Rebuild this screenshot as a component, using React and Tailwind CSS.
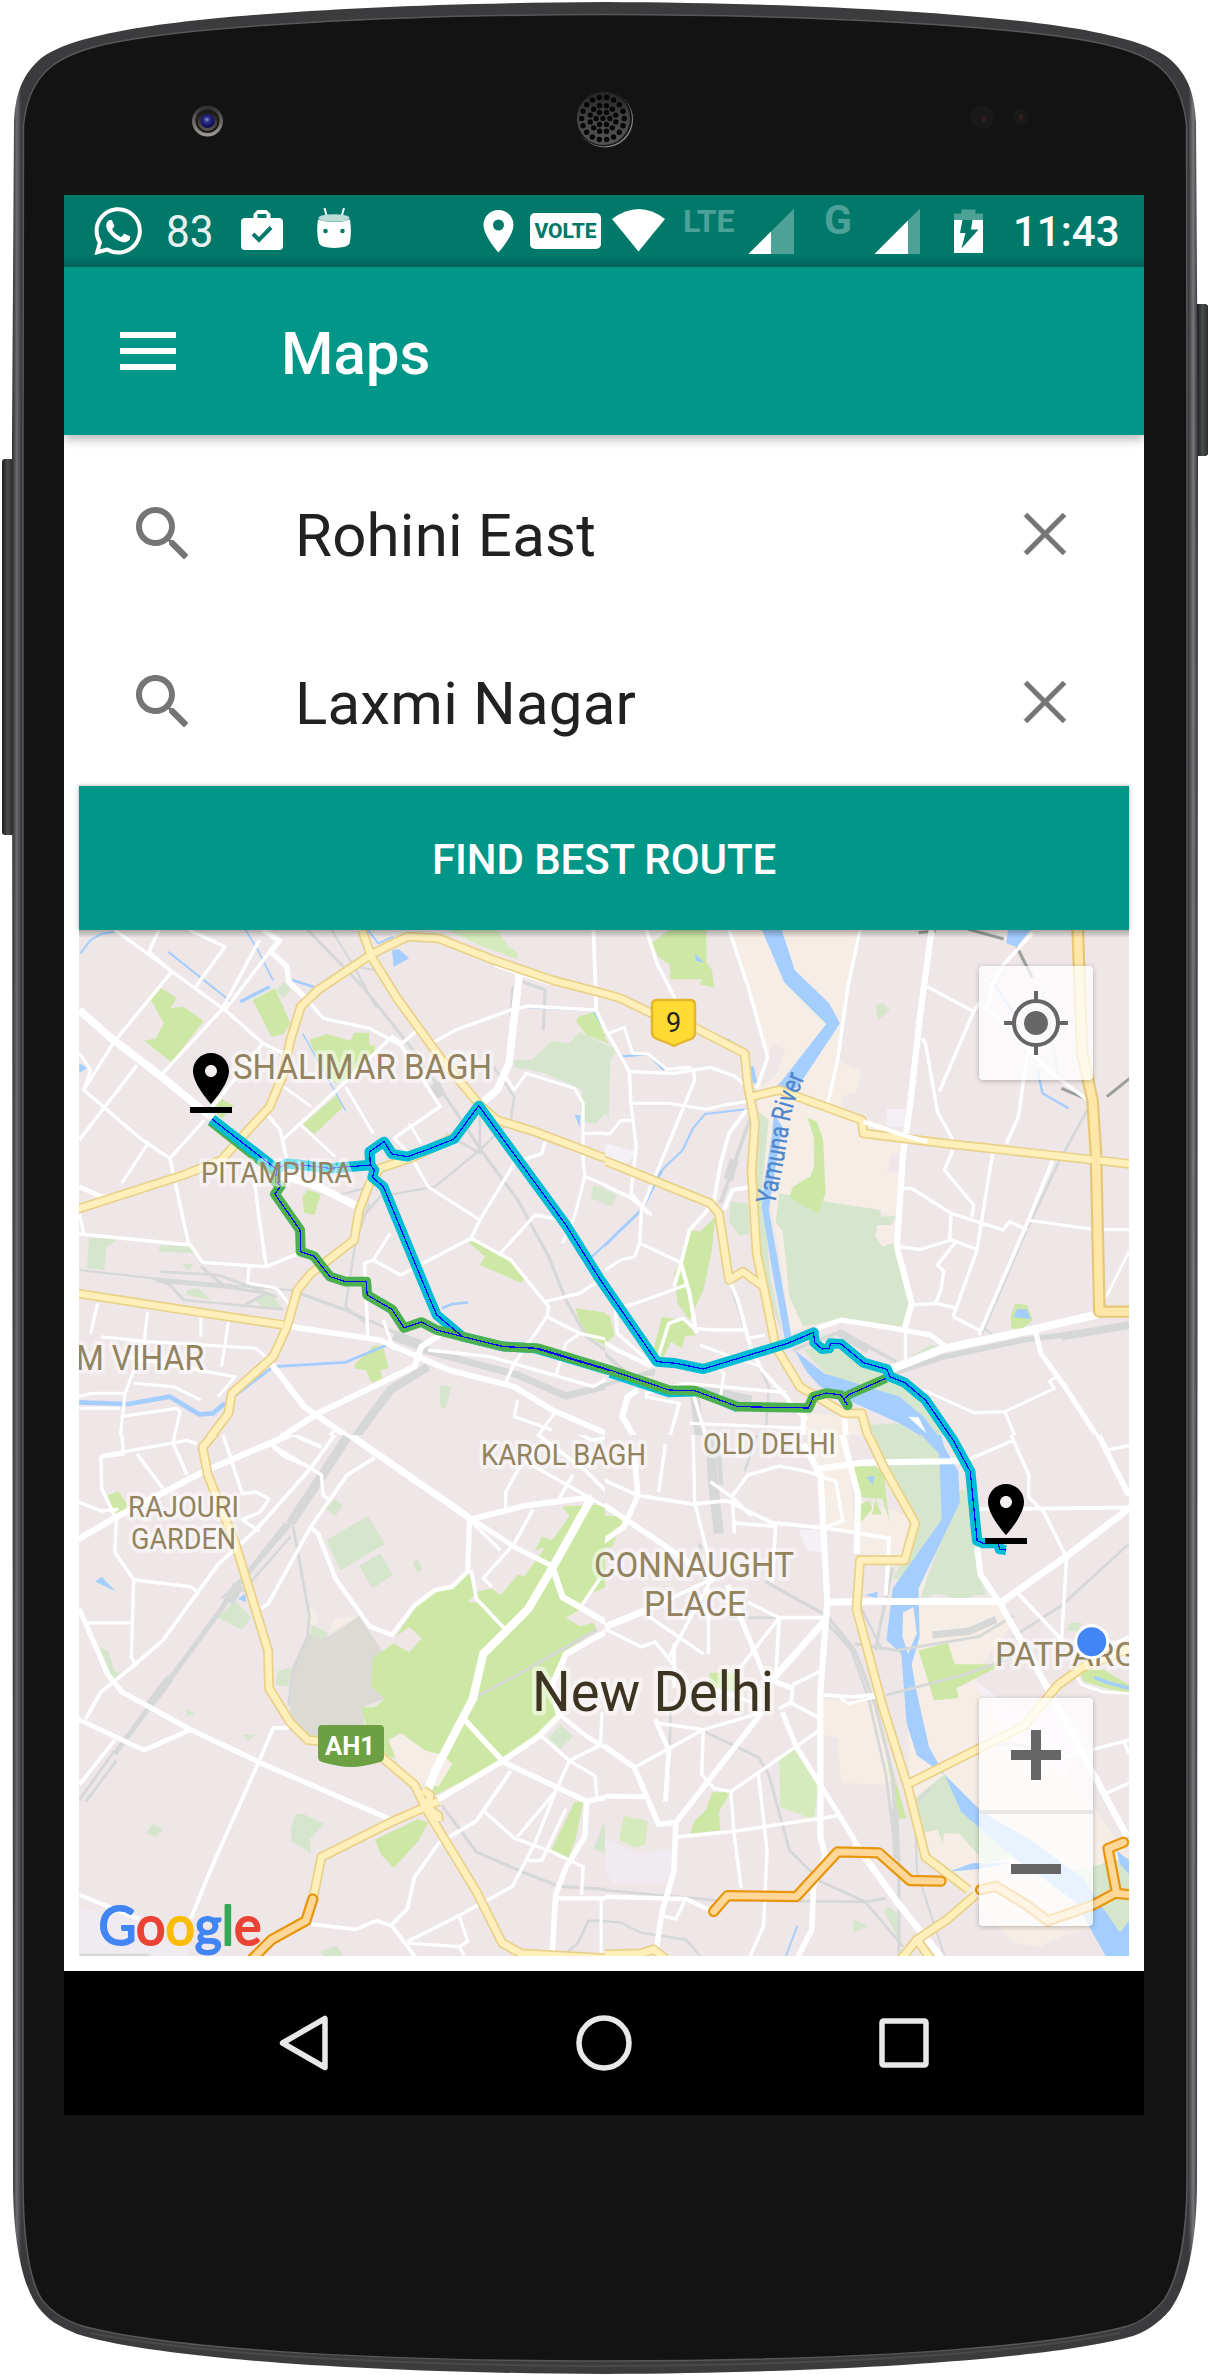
import React from "react";

/* ---------- palette ---------- */
const C = {
  land: "#eee6e7",
  park: "#cde8a5",
  parkSoft: "#d5ebbd",
  green: "#d6e6cd",
  water: "#a3ceff",
  sand: "#f6ede6",
  lilac: "#f5f0f6",
  haze: "#efebf0",
  grey: "#dcdad5",
  rail: "#d6d8d7",
  railDark: "#9b9f9c",
};

/* ---------- map data: four quadrants, each in its own local units ---------- */
/* areas: [fill, path]   lines/roads: [width, path] */
const NW = {
  areas: [
    [C.park, "M265 205L310 235 290 265 330 260 388 303 295 427 215 362 250 355 272 310 235 240Z"],
    [C.park, "M595 205L640 310 620 342 585 350 530 240Z"],
    [C.park, "M695 360L745 342 815 362 825 338 868 338 870 375 886 378 882 405 800 480 770 490 720 430Z"],
    [C.park, "M775 525L792 562 710 643 676 613Z"],
    [C.park, "M430 530L476 558 440 598 410 560Z"],
    [C.park, "M690 810L728 822 710 885 680 878 675 830Z"],
    [C.park, "M1155 965L1180 965 1285 1020 1320 1075 1310 1088 1190 1035 1205 1010Z"],
    [C.park, "M885 1275L910 1285 926 1345 900 1350 908 1375 875 1388 860 1350 825 1345 830 1330Z"],
    [C.park, "M1468 1165L1568 1180V1285L1490 1240Z"],
    [C.park, "M1475 290L1525 275 1550 340 1568 345V372L1500 345 1470 305Z"],
    [C.parkSoft, "M1095 30H1240L1270 75 1300 100 1298 118 1180 72Z"],
    [C.green, "M1480 335L1568 380V590L1550 585 1525 612 1495 605 1480 560 1490 510 1380 460 1290 440 1285 420 1340 420 1400 362 1450 370Z"],
    [C.green, "M55 955H140L105 985 100 1050 50 1045Z"],
    [C.green, "M265 975L360 980 370 1000 256 995Z"],
    [C.green, "M1520 795L1568 810V855L1512 835Z"],
    [C.green, "M1075 1395L1107 1400 1090 1468 1075 1460Z"],
    [C.green, "M620 185L642 210 620 232 598 212Z"],
    [C.green, "M325 1032H360L342 1053Z"],
    [C.green, "M340 1110L372 1105 410 1140 335 1125Z"],
    [C.green, "M535 1140L580 1118 620 1168 560 1160Z"],
    [C.water, "M935 90L955 88 985 115 940 140Z"],
    [C.water, "M27 430L50 445 27 458Z"],
    [C.water, "M1465 585L1482 585 1480 620Z"],
  ],
  water: [
    [5, "M285 95L465 243"], [9, "M495 245L580 200"], [4, "M510 30L545 90 590 182"],
    [7, "M645 180L720 205"], [5, "M30 100L60 60 90 42 130 35"],
    [13, "M27 1447L170 1452 290 1430 375 1483 415 1480 450 1450"],
    [7, "M450 1450L590 1340 800 1327 920 1275"], [5, "M865 30L895 70 940 50"],
    [7, "M1080 1165L1110 1152 1155 1147"], [4, "M1335 262L1520 272 1555 335"],
    [5, "M1515 1010L1568 960"], [3, "M675 340L735 450 800 572"],
  ],
  rails: [
    [8, "M690 30L850 200 1000 395 1110 560 1200 700 1300 840 1390 1010 1440 1140 1500 1250 1568 1300"],
    [5, "M760 30L830 150 890 265"], [8, "M1374 330L1380 210 1300 180 1285 210 1280 290"],
    [30, "M1058 490L1078 530"], [5, "M27 1050L240 1075 380 1090 640 1110"],
    [8, "M640 1110L800 1170 930 1230 1010 1275"], [20, "M1010 1285L1300 1365 1440 1428 1568 1395"],
    [7, "M260 1055L430 1065 600 1130"], [7, "M240 1075L290 1095 330 1140 620 1168"],
    [14, "M250 1080L470 1100"], [8, "M380 1040L450 1100 570 1120 500 1160"],
    [24, "M1040 1340L930 1410 830 1550"], [30, "M940 1245L1040 1285"],
    [6, "M870 850L830 960 800 1160 860 1210"], [6, "M780 826L920 786"],
    [6, "M860 880L900 830 1060 800 1190 690 1280 600 1290 530 1230 440"],
    [6, "M1190 555V700L1090 640"], [5, "M830 140L885 150"],
  ],
  roads: [
    [8, "M130 30L450 270 560 370 620 400"],
    [21, "M27 270L120 355 260 465 390 575 500 660 600 760 720 800 840 862"],
    [8, "M258 30L230 95 295 155 125 370 40 510 210 660 290 715 345 975"],
    [8, "M345 30L450 80 365 200"], [8, "M550 60L440 270 260 470"],
    [14, "M560 30L608 62 582 95 630 140 635 185 690 240"],
    [8, "M690 240L735 295 870 325 960 375 1075 560 940 655"], [8, "M580 95L450 270"],
    [8, "M195 435L27 660"], [7, "M27 400L60 450 40 510"], [8, "M560 370L430 540 400 580"],
    [7, "M230 665L150 790"], [8, "M570 580L610 630 630 720"],
    [8, "M617 660L790 495 935 350 965 370 1003 335"], [6, "M620 500L700 560"],
    [6, "M670 615L770 710"], [7, "M800 500L880 640"],
    [8, "M290 715L390 600"], [7, "M940 655L985 700 1040 800 1190 900"], [6, "M985 610L1020 670"],
    [8, "M1050 370L1120 330 1280 270 1330 258 1525 270"], [9, "M1520 30L1528 270 1568 360"],
    [20, "M1305 160L1290 290 1275 430 1240 510 1195 550"], [12, "M1235 135L1320 165 1400 190"],
    [7, "M1265 470L1290 510 1325 460 1465 505 1490 550 1490 720 1495 770 1465 890 1430 970"],
    [7, "M1490 640H1568"], [7, "M1495 770L1568 800"],
    [8, "M1380 665L1370 700 1290 730 1190 900 1165 955 960 1065 880 1020 855 1030 865 1250"],
    [8, "M1430 900L1350 885 1250 1000"], [8, "M1165 955L1280 1020 1390 1160 1385 1190 1480 1240 1568 1260"],
    [8, "M1380 1145L1480 1120 1568 1060"], [8, "M1385 1190L1290 1330 1260 1400"], [7, "M880 1020L930 940"],
    [8, "M27 942L350 975 385 1027 570 1040 640 1010 700 990"], [12, "M27 800L90 830 150 830"],
    [7, "M27 880L40 940"], [8, "M535 780L550 900 570 1040"], [7, "M520 1040L515 1088 600 1105 650 1170"],
    [15, "M640 1220L900 1260 1010 1310 1100 1350 1290 1400 1400 1470 1568 1545"],
    [7, "M80 1150L60 1240"], [7, "M225 1175L215 1270 160 1420 145 1560"], [7, "M380 1190V1250"],
    [7, "M460 1205L440 1340"], [7, "M90 1250L230 1265 540 1285 580 1320"],
    [7, "M160 1310L480 1370 430 1430"], [7, "M185 1390L300 1400 380 1440"],
    [7, "M27 1430L60 1420 160 1420"], [7, "M27 1465H145"], [7, "M145 1490L310 1465 320 1475 300 1560"],
    [16, "M580 1325L680 1460 820 1560"], [16, "M600 1560L720 1480 1000 1340 1020 1280 1080 1240"],
    [8, "M1040 1290L1220 1310 1520 1400 1568 1370"], [7, "M1300 1440L1290 1490 1400 1530"],
    [7, "M1410 1475L1350 1560"], [7, "M720 1480L770 1530 740 1560"], [7, "M910 1200L940 1290"],
    [7, "M1480 1240L1440 1270 1410 1370"],
  ],
  highways: [
    "M848 30L875 110 950 235 1080 420 1190 555 1240 600 1350 635 1568 720",
    "M20 868L330 765 440 720 500 650 580 560 620 460 640 360 670 260 720 210 880 100 980 50 1070 55 1230 120 1400 180 1568 225",
    "M20 1120L300 1165 620 1215",
    "M1190 555L1120 650 1000 710 900 745 870 790 840 870 825 960 700 1060 660 1110 630 1220 590 1310 470 1420 460 1480 390 1575",
  ],
};

const NE = {
  areas: [
    [C.sand, "M375 30H755L715 200 690 420 760 455 745 515 700 530 705 565 880 640 870 890 650 850 520 820 480 760 455 500 487 412Z"],
    [C.sand, "M490 820H540L530 930 590 1220 555 1240 520 1000Z"],
    [C.sand, "M800 910H860L862 970 820 985 800 950Z"],
    [C.sand, "M590 1480L760 1490 790 1560H590Z"],
    [C.land, "M500 372L538 390 510 470 470 500 470 460Z"],
    [C.lilac, "M833 567H885V620H833Z"],
    [C.lilac, "M0 665L105 695 80 730 0 705Z"],
    ["#f0e6ea", "M845 705L880 700 870 760 833 755Z"],
    [C.green, "M520 820L660 845 815 870 815 890 858 888 845 915 805 915 800 950 820 980 860 965 862 1000 905 1150 885 1220 700 1195 590 1220 550 1130 530 930 510 910Z"],
    [C.green, "M0 370L50 385 30 420 25 600 0 540Z"],
    [C.green, "M440 560L490 600 470 800 495 1080 530 1240 480 1100 440 800Z"],
    [C.green, "M380 845L430 850 435 940 405 948 375 905Z"],
    [C.green, "M820 248L842 270 808 300 800 258Z"],
    [C.green, "M0 800L50 825 35 858 0 850Z"],
    [C.green, "M590 1290L660 1275 880 1380 1010 1560H960L860 1450 740 1395 650 1355Z"],
    [C.green, "M780 1515L870 1510 940 1560H800Z"],
    [C.green, "M900 1310L960 1275 985 1280 900 1314Z"],
    [C.park, "M200 30H308L310 130 325 150 332 203 290 193 295 178 203 178 203 135 170 110 150 70Z"],
    [C.park, "M603 593L630 605 648 660 655 820 633 882 550 830 560 800 610 770 622 740 620 650Z"],
    [C.park, "M262 930L290 935 335 890 325 990 300 1110 260 1200 225 1150 215 1060 235 1020Z"],
    [C.park, "M180 1190L240 1200 280 1245 245 1250 240 1285 205 1265 185 1310 150 1310Z"],
    [C.park, "M0 1185L28 1185 42 1245 10 1280 0 1270Z"],
    [C.park, "M0 330L25 370 0 365Z"],
    [C.park, "M1205 1150L1240 1155 1257 1200 1225 1228 1195 1225 1192 1190Z"],
    [C.water, "M470 30H528L565 150 665 250 697 310 575 500 540 520 512 500 530 480 657 312 535 187Z"],
    [C.water, "M505 580L530 620 500 800 490 870 530 1100 560 1275 540 1275 500 1050 470 860 475 800 500 640Z"],
    [C.water, "M565 1290L650 1360 870 1430 940 1490 990 1560H950L870 1510 740 1450 640 1400 600 1355Z"],
    [C.water, "M1185 30H1250L1210 80 1180 70Z"],
    [C.water, "M275 100L303 128 278 122Z"],
    [C.water, "M1212 1167L1240 1168 1250 1198 1200 1190Z"],
    ["#ffffff", "M895 1490L925 1492 948 1540Z"],
  ],
  water: [
    [6, "M0 285L15 330"], [6, "M60 410L140 402 185 450"], [12, "M440 440L450 490"],
    [5, "M425 568L305 582 270 625 240 690 180 750"], [8, "M180 750L120 870 0 990"],
    [4, "M285 328L380 362"], [6, "M1270 450L1285 520 1360 565"],
    [3, "M1135 175L1200 280"],
  ],
  rails: [
    [7, "M1415 570L1330 730 1230 950 1110 1240"], [10, "M445 570L390 730 350 850"], [26, "M390 720L372 780"],
    [6, "M380 1100L440 1290 490 1400 480 1560"], [16, "M1568 1215L1230 1260 1000 1310 850 1360"],
    [10, "M560 1290L700 1235 860 1325"], [22, "M690 1235L780 1290"], [10, "M0 1290L90 1370 160 1360"],
    [10, "M0 1400L160 1350"], [6, "M1285 210L1330 460"], [22, "M1340 1250L1536 1215"], [6, "M1110 1220L1140 1245"],
    [26, "M250 1400L440 1440"], [26, "M275 1420L290 1560"],
  ],
  darkRails: ["M925 38L975 32", "M1070 28L1172 57", "M1210 80L1255 172", "M1340 505L1412 537", "M1472 530L1538 475"],
  roads: [
    [8, "M135 30L165 130 220 240"], [8, "M375 30L430 200 487 412 455 505"],
    [8, "M755 30L720 200 690 420 660 555"],
    [16, "M963 30L930 280 900 560 880 700 862 980 905 1150 885 1225"], [8, "M887 1220V1340"],
    [8, "M950 200L1085 275 1100 250 1165 300 1300 450 1415 540"], [8, "M1085 275L985 515"],
    [8, "M935 355L945 370 980 575 1025 660"], [9, "M1125 265L1140 190 1175 130 1255 40"],
    [8, "M1240 400L1215 590 1180 670"], [8, "M1025 690L1000 750 1085 855 1080 890"],
    [8, "M880 805H905L1020 880 1170 930 1190 905 1240 930"], [8, "M1140 700L1110 890 1095 990 1025 1190"],
    [9, "M1315 720L1240 910 1100 1245"], [7, "M1240 900L1430 928 1568 930"],
    [8, "M1020 880L1015 960"], [8, "M865 980L930 988 1020 960 1095 988"],
    [8, "M1030 970L980 1035 998 1055 990 1110 975 1150"], [8, "M905 1155L975 1150 1040 1165"],
    [8, "M1025 1190L1100 1230"], [6, "M1536 995L1470 1130"],
    [13, "M630 1225L700 1200 850 1225 960 1245 1010 1285"], [22, "M840 1350L1000 1285 1230 1235 1445 1183"],
    [13, "M1265 1235L1280 1300 1350 1400 1450 1560"],
    [7, "M940 1410L1085 1478 1175 1475 1320 1405 1305 1385 1325 1370"], [7, "M1175 1475L1210 1560"],
    [8, "M0 300L25 345 85 455 90 550 105 680 90 820 140 880"],
    [7, "M25 340L70 322 95 400 140 402 195 448 265 442"],
    [8, "M85 455L215 460 320 442 390 468 420 495"], [8, "M270 445L275 480 120 870 115 970 240 1030"],
    [7, "M95 550H200L310 568 360 555 425 545"], [7, "M0 645L30 640 60 602 90 600"], [8, "M0 790L85 830 150 885"],
    [9, "M425 570L375 640 350 730 330 850 260 930 235 1030 215 1100"],
    [10, "M235 1030L260 1120 280 1240"], [7, "M115 970L100 1010 60 1020 0 1060"],
    [8, "M250 1095L90 1155 45 1165 50 1240 160 1340"], [8, "M160 1340L200 1210 240 1195 275 1225 330 1230 420 1230"],
    [7, "M430 1255L480 1245"], [10, "M360 870L385 810 440 800"], [9, "M380 1090L400 1140 430 1255 445 1300 470 1350 550 1440"],
    [7, "M290 1275L380 1310 470 1340"], [11, "M0 1260L50 1290 150 1340"], [7, "M330 1330L360 1360 350 1430"],
    [8, "M130 1420L250 1390 540 1418"], [16, "M110 1410L80 1430 65 1490 110 1570"],
    [8, "M130 1430L230 1450 200 1560"], [8, "M265 1400L310 1560"], [12, "M590 1480V1560"],
    [7, "M260 1510L600 1525"], [14, "M710 1490L715 1560"], [12, "M545 1440L600 1500"],
  ],
  highways: [
    "M-10 712L320 850 345 880 375 1080 415 1055 475 1100",
    "M440 530L520 510 760 600 765 640 1000 670 1568 735",
    "M-10 214L60 235 150 280 270 320 420 400 430 500 450 610 440 750 455 1000 475 1100 510 1280 580 1400 710 1480 760 1480 785 1575",
  ],
  wide: ["M1387 25L1400 400 1430 540 1440 700 1450 1175H1575"],
  overlay: [[13, "M765 605L880 645 950 665"]],
};

const SW = {
  areas: [
    [C.haze, "M27 1390L200 1410 340 1460 345 1530H27Z"],
    [C.grey, "M640 800L645 700 695 590 750 600 840 540 905 640 875 745 915 780 850 805 855 880 830 900H700L640 840Z"],
    [C.park, "M1155 410L1180 470 1225 460 1250 480 1300 420 1320 425 1380 340 1350 350 1370 310 1400 320 1450 250 1430 222 1568 215V450L1500 480 1485 520 1440 545 1480 570 1520 560 1530 580 1430 650 1400 740 1420 830 1360 900 1250 965 1060 1060 1040 1035 1080 950 1020 930 960 880 925 900 950 955 910 940 860 860 845 805 885 805 915 780 875 745 880 660 940 620 985 645 1022 605 985 572 945 600 1000 520 1060 465 1110 455Z"],
    [C.land, "M1180 465L1225 455 1205 425 1185 440Z"],
    [C.land, "M1155 500L1180 475 1190 500Z"],
    [C.sand, "M925 900L965 882 1030 930 1085 945 1110 970 1070 1035 1010 1025 960 990Z"],
    [C.sand, "M750 590L770 548 835 540Z"],
    [C.sand, "M695 515L712 522 720 560 697 570Z"],
    [C.park, "M885 1190L1010 1130 1040 1140 1010 1195 940 1272 905 1235Z"],
    [C.park, "M1465 1080H1490L1470 1180 1445 1250 1395 1225Z"],
    [C.park, "M110 190L140 178 165 215 160 240 135 250 115 215Z"],
    [C.green, "M745 320L865 250 915 330 785 408Z"],
    [C.green, "M840 395L900 358 938 420 878 460Z"],
    [C.green, "M770 200L792 220 770 250 742 228Z"],
    [C.green, "M430 545L480 495 525 545 500 580Z"],
    [C.green, "M1010 376L1022 405 1008 414 995 382Z"],
    [C.green, "M655 1115L678 1115 738 1143 695 1190 700 1230 645 1195 640 1160Z"],
    [C.green, "M240 1143L270 1158 250 1182 220 1170Z"],
    [C.green, "M85 630L110 640 130 700 150 710 125 728Z"],
    [C.green, "M605 700L640 690 635 745 595 740Z"],
    [C.green, "M700 565L750 590 735 608 700 595Z"],
    [C.green, "M1425 855L1460 890 1425 925 1390 895Z"],
    [C.green, "M340 812L365 823 335 835Z"],
    [C.green, "M500 885L538 885 518 902Z"],
    [C.green, "M725 1515L775 1497 795 1530H740Z"],
    [C.green, "M1550 1140L1568 1180V1235L1520 1215Z"],
    [C.water, "M73 440L92 426 132 468Z"],
    [C.water, "M488 490L510 475V500Z"],
  ],
  water: [],
  rails: [
    [26, "M825 -10L720 150 640 270"], [14, "M640 270L470 470 440 520 300 710 130 940"],
    [6, "M625 270L500 430 440 490"], [6, "M640 310L500 470"], [30, "M490 450L460 500"], [24, "M290 720L230 800"],
    [7, "M648 280L695 540 690 600 645 700 635 800"], [7, "M130 930L27 1075"], [7, "M135 960L45 1080"],
    [7, "M1180 775L1300 710 1530 580"], [8, "M1080 1090L1180 1225 1330 1290 1420 1325 1568 1335"],
    [7, "M1430 1527L1475 1490 1505 1425 1568 1425"], [5, "M27 1524H230"],
  ],
  roads: [
    [18, "M770 -15L1160 255"], [13, "M1160 255L1300 345 1400 395"],
    [16, "M20 320L130 255 390 120 600 30 680 -5"], [15, "M1160 260L1320 220 1515 195"],
    [22, "M1515 195L1440 330 1395 410 1330 520 1200 650 1170 780 1060 990 1030 1070"],
    [9, "M1340 0L1500 120 1568 190"], [9, "M1420 -20L1515 30 1568 20"],
    [8, "M150 0L155 70 90 78 92 170 135 260 130 355 185 435 178 660 190 680"],
    [8, "M90 75L340 30 370 40"], [8, "M195 70L270 170"], [8, "M305 0L300 40 340 130"], [8, "M27 210L90 235 140 230"],
    [8, "M580 40L730 130 735 190 760 205"], [8, "M580 40L620 75 700 110"], [9, "M620 0L730 50"],
    [9, "M775 5L700 110 540 290 430 390 270 610 190 680 90 760 45 840"],
    [9, "M885 80L805 130 700 280 575 505 555 518"],
    [11, "M700 285L720 300 770 430 870 570 935 595 1000 510 1060 465 1110 455 1160 405"],
    [13, "M1160 260L1155 405"], [9, "M1165 405L1180 490 1260 575"],
    [8, "M440 0L500 185 540 180 578 200 550 240 500 260 550 295"],
    [13, "M27 520L110 710 150 760 350 870 550 965 940 1135"],
    [8, "M45 560H180"], [8, "M185 435L350 455 370 470"],
    [12, "M20 838L215 930 350 870"], [9, "M130 900L27 1030"],
    [9, "M635 865H590L550 960 420 1250 350 1420"], [10, "M27 1350L200 1420"],
    [8, "M1345 230L1290 330 1200 430 1225 455"], [8, "M1250 350L1160 260"], [8, "M1310 100L1265 180V235"],
    [8, "M1320 90L1568 230"], [8, "M1460 130L1420 200"],
    [16, "M1400 395L1430 485 1568 565"], [8, "M1540 430L1485 510"],
    [15, "M1568 580L1440 650 1400 740 1420 830 1360 890 1250 965 1060 1078"],
    [14, "M1140 835L1260 965 1500 1078 1568 1065"], [11, "M1420 825L1500 890 1568 930"], [8, "M1545 820L1540 915 1450 960"],
    [8, "M1370 890L1450 960 1410 1050 1350 1200 1285 1325 1130 1410 980 1485"], [8, "M1450 960L1525 1005 1530 1070"],
    [9, "M1280 990L1200 1105 1180 1135 1070 1200 1000 1300 980 1390 930 1440"],
    [8, "M1200 1105L1290 1185 1400 1225 1490 1268 1485 1350"], [8, "M1410 1050L1300 1180"],
    [8, "M1320 1250H1370L1440 1100"], [14, "M1500 1080L1495 1180 1440 1270 1410 1350 1400 1527"],
    [11, "M1410 1360H1568"], [7, "M1542 1360V1527"],
    [9, "M700 1435L830 1450 890 1425 935 1440 1000 1527"], [7, "M1130 1410L1155 1485 1130 1500 980 1490"],
    [7, "M1130 1500L1145 1527"],
  ],
  highways: [
    "M440 -15L385 50 400 130 480 330 575 640 578 750 640 850 690 900 800 910 900 945 1000 1030 1040 1110 1180 1340 1255 1490 1310 1520 1575 1535",
    "M1070 1078L940 1135 730 1240 706 1360",
    "M1025 1045L1045 1060 1040 1100 1070 1120 1070 1135",
  ],
  orange: ["M705 1362L685 1425 585 1480 530 1535"],
};

const SE = {
  areas: [
    [C.sand, "M600 0H720L740 300 660 270Z"],
    [C.sand, "M740 200L900 250 890 370 750 360Z"],
    [C.sand, "M650 780L700 785 800 790 860 1000 830 1030 700 1025 690 895 650 885Z"],
    [C.sand, "M900 400L960 380 930 500 1150 505 1200 560 1080 720 1220 830 1400 1050 1536 1240V1420L1340 1470 1280 1500 1200 1490 960 1230 900 1080 890 700Z"],
    [C.lilac, "M1080 720L1220 830 1300 760 1420 900 1350 1000 1200 900Z"],
    [C.haze, "M0 1180L100 1225 215 1220 210 1320 40 1320 0 1250Z"],
    [C.lilac, "M577 290H650V355L600 350Z"],
    [C.green, "M790 -5H960L990 90 992 260 880 440 850 430 885 370 925 270 825 90Z"],
    [C.green, "M1050 170L1085 200 1100 400 1120 480 1090 480 1050 495 980 475 930 490 950 430 1000 300Z"],
    [C.green, "M900 1080L1000 1000 1090 1100 1200 1240 1120 1260 1045 1172 1000 1170 995 1200 980 1160 940 1170Z"],
    [C.green, "M1380 1280L1536 1240V1440L1510 1465 1440 1370Z"],
    [C.green, "M735 1420L778 1440 735 1462Z"],
    [C.green, "M835 1380L870 1410 875 1490 825 1400Z"],
    [C.parkSoft, "M520 945L570 920 637 1020 620 1130 523 1095Z"],
    [C.parkSoft, "M70 1120L140 1135 130 1205 100 1212 55 1190Z"],
    [C.park, "M0 250L70 250 35 340 0 343Z"],
    [C.park, "M735 105H800L825 130 832 200 750 195Z"],
    [C.park, "M755 215L785 205 790 230 755 270Z"],
    [C.park, "M800 200L818 245 790 245Z"],
    [C.park, "M820 200H832L840 265Z"],
    [C.park, "M325 1052H378L345 1110 350 1162 262 1172 275 1135 310 1100Z"],
    [C.park, "M925 640L1010 618 1030 680 1140 680 1180 650 1150 690 1035 750 1042 778 970 785Z"],
    [C.park, "M820 880L890 1128 868 1128 845 1020Z"],
    [C.park, "M318 705L395 705V760L320 750Z"],
    [C.park, "M1390 700L1460 695 1536 740V765L1470 750 1405 730Z"],
    [C.green, "M1365 560L1400 560 1390 585 1355 582Z"],
    [C.water, "M915 -5L985 70 992 260 850 460 832 610 875 650 890 850 920 945 1000 1000 1050 1110 1200 1240 1380 1370 1470 1530H1536V1425L1510 1460 1400 1300 1250 1190 1110 1110 1000 1000 955 920 915 740 905 680 928 600 925 460 1045 210 1040 120 1000 50 985 -5Z"],
    [C.sand, "M880 530L910 515 920 590 895 650 878 600Z"],
    [C.water, "M1015 1282L1080 1258 1190 1258 1100 1275Z"],
    [C.water, "M1500 1220L1536 1250V1290L1510 1260Z"],
    [C.water, "M775 137L797 133 792 160Z"],
    [C.water, "M770 480L805 470 805 488Z"],
  ],
  water: [[9, "M1435 718L1480 735 1536 750"], [4, "M573 1440L540 1527"]],
  rails: [
    [28, "M320 -5L328 150 345 300"], [12, "M340 0L352 160"], [6, "M460 0L420 120"],
    [9, "M480 440L660 540 740 640 800 800 850 1000 862 1240"], [7, "M660 560L730 640 780 780 830 1000 855 1200"],
    [7, "M370 545H640"], [7, "M740 620L860 640 1100 600 1200 540"], [7, "M830 770L1060 710 1200 660"],
    [20, "M965 595L1070 585 1150 550"], [7, "M290 870L460 950 490 1000 550 1220 640 1310 770 1370 880 1500"],
    [7, "M0 1335L330 1365 770 1370 830 1360"], [7, "M205 820L200 1000"], [8, "M850 400L815 560 800 640"],
    [7, "M1536 330L1340 510 1200 600"], [6, "M760 520L820 640"], [8, "M868 1240V1527"], [20, "M855 1100L862 1245"],
    [5, "M915 1100L920 1280 1000 1527"], [6, "M0 1425L60 1430 120 1460 250 1480 290 1527"],
    [5, "M1100 920L1200 910 1350 950"], [6, "M910 1090L960 1040"], [8, "M290 330L300 450"],
  ],
  roads: [
    [16, "M590 40L640 130 660 500 640 760 640 1180 655 1240"], [18, "M660 500L750 498H1170"],
    [16, "M700 0L750 190 745 360"], [16, "M620 115L760 95 1060 90"],
    [8, "M1060 90L1200 30 1190 0"], [8, "M1200 30L1245 130V195L1290 240 1355 370 1340 610"],
    [9, "M1100 230L1536 225"], [15, "M1440 0L1500 120 1536 190"], [8, "M1465 60L1536 45"],
    [18, "M1540 225L1350 370 1165 500"], [16, "M1095 340L1105 420 1165 510"],
    [17, "M1165 510L1300 750 1530 1180"], [9, "M1215 475L1350 620"], [18, "M-10 582L130 525"],
    [9, "M130 525L330 430"], [9, "M0 140L110 190 270 215 370 205 500 270 660 285 840 315 830 480"],
    [14, "M0 210L150 310 280 400 330 440"], [8, "M320 150L390 200 440 250"],
    [8, "M385 190L430 130 520 105 600 120 685 150 705 265 640 285"], [8, "M270 0L275 210 330 430"], [8, "M190 40L170 180"],
    [14, "M100 70L110 190 70 280 0 330"], [8, "M390 270L510 280 500 440"], [8, "M385 200L390 300"],
    [9, "M520 550L510 720"], [13, "M370 450L480 720 560 750"], [9, "M560 745L555 790 520 810"],
    [8, "M140 540L300 650"], [8, "M315 460V650"], [8, "M200 660L320 440"],
    [9, "M520 545L650 545"], [8, "M430 500L520 545 400 700"], [18, "M652 555L500 725"],
    [9, "M560 740L640 700"], [9, "M550 790L635 835"], [13, "M530 820L570 920 690 1110 750 1210"],
    [18, "M740 1200L870 1380 990 1530"], [14, "M470 820L220 1140 170 1145 100 980 0 910"],
    [14, "M220 1140L215 1280 180 1400 160 1530"], [12, "M0 1063L130 1065"],
    [8, "M100 980L300 870 470 820"], [8, "M640 870L380 1050 330 1040 295 1000 300 870 160 850"],
    [12, "M160 840L200 930 190 1080"], [8, "M0 570L120 630 160 615 220 690"], [8, "M215 620V750"],
    [8, "M380 1050L390 1180 410 1330"], [8, "M460 1000L485 1220 475 1440 435 1530"],
    [8, "M225 1182L390 1165 690 1120"], [11, "M0 1355L250 1362 320 1395"], [8, "M245 1370L220 1420 180 1410"],
    [14, "M650 1240L620 1330 615 1450 575 1530"], [9, "M650 770L740 775 820 765"], [6, "M690 770L720 795 800 775"],
    [7, "M1380 710L1400 740 1460 760 1536 765"], [7, "M1536 600L1470 630"], [8, "M1350 950L1536 900"],
    [8, "M1460 1060L1536 1025"], [8, "M1520 900L1536 940"], [7, "M320 750L470 800"], [8, "M8 840V910"],
    [8, "M8 1370V1527"],
  ],
  highways: [
    "M-10 1524L120 1520 155 1508 190 1535",
    "M890 1030L1230 860 1330 740 1400 690 1545 630",
    "M1090 1350L1010 1420 920 1480 875 1535", "M920 1480L960 1535",
    "M765 -15L825 110 915 270 885 378H755L745 520 820 800 895 1040 945 1240 1070 1335",
  ],
  orange: [
    "M330 1398L370 1352 570 1355 690 1225 810 1228 900 1308 990 1310",
    "M1105 1335L1150 1325 1240 1380 1300 1425 1430 1380 1495 1345 1545 1350",
    "M1500 1345L1475 1215 1520 1197",
  ],
};

function Strokes({ items, color, grow = 0 }) {
  return items.map(([w, d], i) => <path key={i} d={d} stroke={color} strokeWidth={w + grow} />);
}

function Quadrant({ data, clip, transform }) {
  const { areas, water, rails, roads, highways, wide = [], orange = [], darkRails = [], overlay = [] } = data;
  return (
    <g clipPath={`url(#${clip})`}>
      <g transform={transform} fill="none" strokeLinejoin="round">
        {areas.map(([f, d], i) => <path key={i} d={d} fill={f} />)}
        <Strokes items={water} color={C.water} grow={1} />
        <Strokes items={rails} color={C.rail} grow={1} />
        {darkRails.map((d) => <path key={d} d={d} stroke={C.railDark} strokeWidth="9" />)}
        <Strokes items={roads} color="#fff" grow={2} />
        {highways.map((d) => <path key={d} d={d} stroke="#ead18a" strokeWidth="29" />)}
        {wide.map((d) => <path key={d} d={d} stroke="#e6c878" strokeWidth="37" />)}
        {highways.map((d) => <path key={d} d={d} stroke="#fff0bb" strokeWidth="19" />)}
        {wide.map((d) => <path key={d} d={d} stroke="#ffe7a9" strokeWidth="24" />)}
        <Strokes items={overlay} color="#fff" />
        {orange.map((d) => <path key={d} d={d} stroke="#e8960c" strokeWidth="33" strokeLinecap="round" />)}
        {orange.map((d) => <path key={d} d={d} stroke="#ffd899" strokeWidth="20" strokeLinecap="round" />)}
      </g>
    </g>
  );
}

const HEAD = "M412 597L600 748 630 730 755 745 872 735";
const LOOP = "M872 735L870 695 912 665 935 702 980 710 1045 686 1115 657 1187 557 1256 655 1440 915 1539 1078 1704 1325 1760 1330 1839 1347 2084 1270 2159 1237 2162 1268 2184 1287 2204 1285 2209 1270 2239 1272 2304 1328 2372 1348 2381 1370 2424 1388 2484 1440 2564 1560 2614 1654 2634 1862 2652 1870 2695 1870 2700 1888 2718 1890";
const BRANCH = "M872 735L884 750 878 772 910 800 1040 1125 1065 1185 1140 1250 1255 1279 1350 1285 1568 1352";
const GREEN = "M600 750L596 785 612 798 595 822 668 930 670 995 708 1008 755 1070 800 1085 860 1085 863 1125 935 1168 970 1224 1020 1206 1065 1230 1140 1250 1260 1280 1360 1285 1568 1350 1739 1410 1814 1412 1939 1460 2144 1464 2159 1430 2197 1419 2239 1425 2258 1456";
const GREEN_TAIL = "M2247 1437L2262 1424 2369 1375";

function Routes() {
  return (
    <g transform="translate(70 920) scale(0.34439 0.33333)" fill="none" strokeLinejoin="round">
      <path d="M408 605L590 754" stroke="#4caf50" strokeWidth="26" />
      <path d={BRANCH} stroke="#00bcd4" strokeWidth="29" />
      <path d="M1568 1360L1739 1419 1830 1416 1939 1464" stroke="#00bcd4" strokeWidth="26" />
      <path d={GREEN} stroke="#4caf50" strokeWidth="29" strokeLinecap="round" />
      <path d={GREEN_TAIL} stroke="#4caf50" strokeWidth="27" />
      <path d={HEAD} stroke="#00bcd4" strokeWidth="31" />
      <path d={LOOP} stroke="#00bcd4" strokeWidth="30" />
      {[HEAD, LOOP, BRANCH, GREEN, GREEN_TAIL].map((d) => (
        <path key={d} d={d} stroke="#0000ff" strokeWidth="3.6" shapeRendering="crispEdges" />
      ))}
    </g>
  );
}

const LABELS = [
  ["SHALIMAR BAGH", 233, 1079, 259, 35],
  ["PITAMPURA", 201, 1183, 151, 29],
  ["M VIHAR", 76, 1370, 128, 35],
  ["KAROL BAGH", 481, 1465, 165, 29.5],
  ["OLD DELHI", 703, 1454, 133, 29.5],
  ["RAJOURI", 128, 1517, 111, 29.5],
  ["GARDEN", 131, 1549, 105, 29.5],
  ["CONNAUGHT", 594, 1577, 200, 35],
  ["PLACE", 644, 1616, 102, 35],
  ["PATPARG", 995, 1666, 142, 34],
];

function Pin({ x, y }) {
  return (
    <g transform={`translate(${x} ${y}) scale(3)`}>
      <circle cx="12" cy="7.9" r="2.4" fill="#f3eef0" />
      <path d="M18 8c0-3.31-2.69-6-6-6S6 4.69 6 8c0 4.5 6 11 6 11s6-6.5 6-11zm-8 0c0-1.1.9-2 2-2s2 .9 2 2-.89 2-2 2c-1.1 0-2-.9-2-2zM5 20v2h14v-2H5z" />
    </g>
  );
}

const GOOGLE = [["G", "#4285f4"], ["o", "#ea4335"], ["o", "#fbbc05"], ["g", "#4285f4"], ["l", "#34a853"], ["e", "#ea4335"]];

function MapCanvas() {
  return (
    <svg viewBox="79 930 1050 1026" className="block h-full w-full" fontFamily="Roboto, sans-serif">
      <defs>
        <clipPath id="nw"><rect x="79" y="930" width="526" height="505" /></clipPath>
        <clipPath id="ne"><rect x="605" y="930" width="524" height="505" /></clipPath>
        <clipPath id="sw"><rect x="79" y="1435" width="526" height="521" /></clipPath>
        <clipPath id="se"><rect x="605" y="1435" width="524" height="521" /></clipPath>
        <path id="river" d="M774.5 1205C780 1180 786 1150 789 1126 Q791 1112 796 1098 L806 1074 812 1056" />
        <linearGradient id="topShade" x1="0" y1="0" x2="0" y2="1">
          <stop offset="0" stopColor="#000" stopOpacity=".28" />
          <stop offset="1" stopColor="#000" stopOpacity="0" />
        </linearGradient>
      </defs>
      <rect x="79" y="930" width="1050" height="1026" fill={C.land} />
      <Quadrant data={NW} clip="nw" transform="translate(70 920) scale(0.34439 0.33333)" />
      <Quadrant data={NE} clip="ne" transform="translate(600 920) scale(0.34439 0.33333)" />
      <Quadrant data={SW} clip="sw" transform="translate(70 1430) scale(0.34439)" />
      <Quadrant data={SE} clip="se" transform="translate(600 1430) scale(0.34439)" />
      <Routes />
      <text fontSize="27" fill="#4f86cc" stroke="#4f86cc" strokeWidth=".3">
        <textPath href="#river" textLength="132" lengthAdjust="spacingAndGlyphs">Yamuna River</textPath>
      </text>
      {LABELS.map(([t, x, y, w, s]) => (
        <text key={t} x={x} y={y} textLength={w} lengthAdjust="spacingAndGlyphs" fontSize={s} fill="#93835f" stroke="#fff" strokeOpacity=".5" strokeWidth="8" strokeLinejoin="round" paintOrder="stroke">{t}</text>
      ))}
      <text x="532" y="1711" textLength="242" lengthAdjust="spacingAndGlyphs" fontSize="56" fill="#3d3422" stroke="#fff" strokeOpacity=".5" strokeWidth="9" strokeLinejoin="round" paintOrder="stroke">New Delhi</text>
      <path d="M657 1000h33q5 0 5 5v28q0 4-4 6l-13 5-4 2-4-2-13-5q-5-2-5-6v-28q0-5 5-5z" fill="#ffdb33" stroke="#e5b52e" strokeWidth="2.4" />
      <text x="673.5" y="1032" textAnchor="middle" fontSize="27" fill="#222">9</text>
      <path d="M322 1725h58q4 0 4 4v28q0 4-4 5-17 5-29 5-12 0-29-5-4-1-4-5v-28q0-4 4-4z" fill="#6da042" />
      <text x="325" y="1755" textLength="50" lengthAdjust="spacingAndGlyphs" fontSize="26" fontWeight="700" fill="#fff">AH1</text>
      <text x="98.5" y="1945" textLength="163" lengthAdjust="spacingAndGlyphs" fontSize="54" fontFamily="Lato, Roboto, sans-serif" strokeWidth="2" strokeLinejoin="round">
        {GOOGLE.map(([ch, color], i) => <tspan key={i} fill={color} stroke={color}>{ch}</tspan>)}
      </text>
      <Pin x={175} y={1047} />
      <Pin x={970} y={1478} />
      <circle cx="1091.7" cy="1641.8" r="17.5" fill="#fff" />
      <circle cx="1091.7" cy="1641.8" r="14.5" fill="#4285f4" />
      <rect x="79" y="930" width="1050" height="8" fill="url(#topShade)" />
    </svg>
  );
}

/* ---------- phone shell ---------- */
const HOLES = [[1, 0, 0], [6, 6.9, 0], [12, 13.2, 15], [18, 21.3, 0]].flatMap(([n, r, off]) =>
  Array.from({ length: n }, (_, i) => {
    const a = ((i * 360) / n + off) * (Math.PI / 180);
    return [r * Math.cos(a), r * Math.sin(a)];
  })
);

function PhoneShell() {
  return (
    <svg viewBox="0 0 1210 2375" className="absolute inset-0 h-full w-full" aria-hidden="true">
      <defs>
        <linearGradient id="edge" x1="12" x2="1198" gradientUnits="userSpaceOnUse">
          <stop offset="0" stopColor="#2b2c2e" /><stop offset=".004" stopColor="#6c6c70" /><stop offset=".008" stopColor="#3a3a3d" />
          <stop offset=".05" stopColor="#3c3c3e" /><stop offset=".95" stopColor="#3c3c3e" />
          <stop offset=".992" stopColor="#3a3a3d" /><stop offset=".996" stopColor="#77777b" /><stop offset="1" stopColor="#303033" />
        </linearGradient>
        <linearGradient id="keyL"><stop offset="0" stopColor="#1c1d1d" /><stop offset=".5" stopColor="#4a4c4c" /><stop offset="1" stopColor="#2a2b2b" /></linearGradient>
        <linearGradient id="mesh" x1="0" y1="0" x2="0" y2="1"><stop offset="0" stopColor="#242424" /><stop offset=".5" stopColor="#444" /><stop offset="1" stopColor="#555" /></linearGradient>
        <linearGradient id="lensRing" x1="0" y1="0" x2="0" y2="1"><stop offset="0" stopColor="#2c2b2a" /><stop offset="1" stopColor="#a09c98" /></linearGradient>
        <linearGradient id="lensInner" x1="0" y1="0" x2="0" y2="1"><stop offset="0" stopColor="#171615" /><stop offset="1" stopColor="#5c5854" /></linearGradient>
        <radialGradient id="lens" cx=".45" cy=".4" r=".55"><stop offset="0" stopColor="#8f97c0" /><stop offset=".4" stopColor="#2a2a8c" /><stop offset="1" stopColor="#0c0c50" /></radialGradient>
      </defs>
      <path d="M13 459H5q-3 0-3 3V832q0 3 3 3H13z" fill="url(#keyL)" />
      <path d="M1197 304h8q3 0 3 3V453q0 3-3 3h-8z" fill="url(#keyL)" />
      <path d="M12 440L14 123C15 98 20 78 38 61 52 48 80 39 116 32 200 15 386 3 605 2 824 3 1010 15 1094 32 1130 39 1158 48 1172 61 1190 78 1195 98 1196 123L1198 440 1197 2180C1197 2240 1188 2285 1170 2310 1158 2324 1145 2332 1133 2336 1060 2357 860 2373 605 2374 350 2373 150 2357 77 2334 58 2326 48 2320 38 2307 22 2285 13 2240 13 2180Z" fill="url(#edge)" />
      <path d="M23 440L23.500 125C26 100 34 80 52 66 66 55 90 47 116 42 200 26 386 15 605 14.500 824 15 1010 26 1094 42 1120 47 1144 55 1158 66 1176 80 1184 100 1186.500 125L1187 440 1187 2180C1187 2230 1180 2275 1164 2300 1150 2316 1140 2322 1128 2326 1050 2347 860 2361 605 2361 350 2361 160 2347 82 2326 60 2318 50 2310 42 2300 28 2278 23 2230 23 2180Z" fill="#131313" stroke="#58585b" strokeWidth="1.500" />
      <path d="M90 2333C200 2354 380 2365 605 2366 830 2365 1010 2354 1120 2333" fill="none" stroke="#4a4a4a" strokeWidth="2" />
      <circle cx="207.500" cy="121" r="15.500" fill="url(#lensRing)" />
      <circle cx="207.500" cy="121" r="12" fill="#1c1b1a" />
      <circle cx="207.500" cy="121" r="10" fill="url(#lensInner)" />
      <circle cx="207.500" cy="121" r="7" fill="url(#lens)" />
      <circle cx="605" cy="119.500" r="28" fill="#8a8a8a" />
      <circle cx="604" cy="118.500" r="28" fill="#161616" />
      <circle cx="603.500" cy="118.500" r="26.500" fill="url(#mesh)" />
      {HOLES.map(([x, y], i) => <circle key={i} cx={603 + x} cy={118.500 + y} r="2.700" fill="#060606" />)}
      <circle cx="982" cy="117" r="12" fill="#1a1919" /><ellipse cx="984" cy="119" rx="2" ry="3.500" fill="#33201a" />
      <circle cx="1021" cy="117" r="8" fill="#1a1919" /><ellipse cx="1021" cy="117" rx="2" ry="3" fill="#33201a" />
    </svg>
  );
}

/* ---------- status bar ---------- */
function Glyph({ className, x, w, children }) {
  return (
    <svg viewBox={`${x} 195 ${w} 72`} className={`h-[72px] shrink-0 ${className}`} fill="#fff">
      {children}
    </svg>
  );
}

function StatusBar() {
  return (
    <div className="flex h-[72px] items-start bg-[linear-gradient(#00796b_0,#00796b_84%,#006155_100%)] text-white">
      <Glyph x={94} w={48} className="ml-[30px] w-[48px]">
        <g transform="translate(94.300 207.300) scale(1.985)">
          <path d="M17.472 14.382c-.297-.149-1.758-.867-2.030-.967-.273-.099-.471-.148-.670.150-.197.297-.767.966-.940 1.164-.173.199-.347.223-.644.075-.297-.150-1.255-.463-2.390-1.475-.883-.788-1.480-1.761-1.653-2.059-.173-.297-.018-.458.130-.606.134-.133.298-.347.446-.520.149-.174.198-.298.298-.497.099-.198.050-.371-.025-.520-.075-.149-.669-1.612-.916-2.207-.242-.579-.487-.500-.669-.510-.173-.008-.371-.010-.570-.010-.198 0-.520.074-.792.372-.272.297-1.040 1.016-1.040 2.479 0 1.462 1.065 2.875 1.213 3.074.149.198 2.096 3.200 5.077 4.487.709.306 1.262.489 1.694.625.712.227 1.360.195 1.871.118.571-.085 1.758-.719 2.006-1.413.248-.694.248-1.289.173-1.413-.074-.124-.272-.198-.570-.347m-5.421 7.403h-.004a9.870 9.870 0 01-5.031-1.378l-.361-.214-3.741.982.998-3.648-.235-.374a9.860 9.860 0 01-1.510-5.260c.001-5.450 4.436-9.884 9.888-9.884 2.640 0 5.122 1.030 6.988 2.898a9.825 9.825 0 012.893 6.994c-.003 5.450-4.437 9.884-9.885 9.884m8.413-18.297A11.815 11.815 0 0012.050 0C5.495 0 .160 5.335.157 11.892c0 2.096.547 4.142 1.588 5.945L.057 24l6.305-1.654a11.882 11.882 0 005.683 1.448h.005c6.554 0 11.890-5.335 11.893-11.893a11.821 11.821 0 00-3.480-8.413z" />
        </g>
      </Glyph>
      <span className="ml-[24px] mt-[10px] w-[51px] origin-left scale-x-[0.94] text-[45px] leading-[53px] font-normal opacity-90">83</span>
      <Glyph x={241} w={43} className="ml-[24px] w-[43px]">
        <path d="M245 218h8.500v-4l4-4h9l4 4v4h8.500q4 0 4 4v24q0 4-4 4h-34q-4 0-4-4v-24q0-4 4-4zm12.500 0h9v-4h-9z" fillRule="evenodd" />
        <path d="M253 234l6 6 12-12.500" fill="none" stroke="#00796b" strokeWidth="4" />
      </Glyph>
      <Glyph x={317} w={35} className="ml-[33px] w-[35px]">
        <path d="M324.500 208l2.500 9M344 208l-2.500 9" stroke="#fff" strokeWidth="2" />
        <path d="M318 219.500q16 5 32 0 2 14-.5 24-1.500 4-15.500 4.500-13-.5-15-4.500-3-10-1-24z" />
        <ellipse cx="334" cy="218" rx="15.500" ry="3.800" fill="#bcdcd8" />
        <circle cx="325.500" cy="231" r="2.300" fill="#00796b" /><circle cx="342.500" cy="231" r="2.300" fill="#00796b" />
      </Glyph>
      <Glyph x={483} w={31} className="ml-[131px] w-[31px]">
        <path d="M498.500 210c-8.500 0-15 6.700-15 15 0 11 15 27.500 15 27.500s15-16.500 15-27.500c0-8.300-6.500-15-15-15zm0 20.500a5.500 5.500 0 110-11 5.500 5.500 0 010 11z" />
      </Glyph>
      <span className="ml-[16px] mt-[18px] flex h-[36px] w-[71px] items-center justify-center rounded-[5px] bg-white text-[21px] leading-none font-extrabold text-[#00796b]">VOLTE</span>
      <Glyph x={612} w={54} className="ml-[11px] w-[54px]">
        <path d="M612 219q27-20 53 0l-26.500 32.500z" />
      </Glyph>
      <span className="ml-[17px] mt-[8px] w-[54px] text-[32px] leading-[36px] font-bold text-[#4da198]">LTE</span>
      <Glyph x={748} w={47} className="ml-[11px] w-[47px]">
        <path d="M794 208.500V254H748.500z" opacity=".3" /><path d="M771 231.500V254H748.500z" />
      </Glyph>
      <span className="ml-[29px] mt-[1px] w-[30px] text-[41px] leading-[48px] font-bold text-[#4da198]">G</span>
      <Glyph x={874} w={47} className="ml-[20px] w-[47px]">
        <path d="M920 208.500V254H874.500z" opacity=".3" /><path d="M908 220.500V254H874.500z" />
      </Glyph>
      <Glyph x={954} w={30} className="ml-[33px] w-[30px]">
        <path d="M954 220v-6.500h7.500v-4h14v4h7.500v6.500z" opacity=".3" />
        <path d="M954 220h29v33h-29z" />
        <path d="M962.500 220h10l-1.500 9.500h7.500l-17 19 4-15.500h-5.500z" fill="#00796b" />
      </Glyph>
      <span className="ml-[29px] mt-[12px] text-[42px] leading-[49px] font-medium whitespace-nowrap">11:43</span>
    </div>
  );
}

function SearchRow({ value }) {
  return (
    <div className="flex h-[168px] items-center pr-[63px] pl-[63px] text-[#757575]">
      <svg viewBox="0 0 24 24" className="h-[72px] w-[72px] shrink-0 fill-current">
        <path d="M15.500 14h-.790l-.280-.270C15.410 12.590 16 11.110 16 9.500 16 5.910 13.090 3 9.500 3S3 5.910 3 9.500 5.910 16 9.500 16c1.610 0 3.090-.590 4.230-1.570l.270.280v.790l5 4.990L20.490 19l-4.990-5zm-6 0C7.010 14 5 11.990 5 9.500S7.010 5 9.500 5 14 7.010 14 9.500 11.990 14 9.500 14z" />
      </svg>
      <span className="ml-[96px] flex-1 pt-[4px] text-[60px] leading-[70px] tracking-[0.2px] text-[#212121]">{value}</span>
      <svg viewBox="0 0 24 24" className="h-[72px] w-[72px] shrink-0 fill-current stroke-current stroke-[0.2]">
        <path d="M19 6.100L17.900 5 12 10.900 6.100 5 5 6.100 10.900 12 5 17.900 6.100 19 12 13.100 17.900 19 19 17.900 13.100 12z" />
      </svg>
    </div>
  );
}

export default function App() {
  return (
    <div className="relative h-[2375px] w-[1210px] overflow-hidden bg-white pt-[195px] pl-[64px] font-['Roboto',sans-serif]">
      <PhoneShell />
      <main className="relative flex h-[1920px] w-[1080px] flex-col bg-white">
        <StatusBar />
        <header className="flex h-[168px] items-center bg-[#009688] pl-[56px] text-white shadow-[0_4px_10px_rgba(0,0,0,0.3)] [clip-path:inset(0_0_-16px_0)]">
          <div className="flex w-[56px] flex-col gap-[10px]">
            <i className="h-[6px] bg-white" />
            <i className="h-[6px] bg-white" />
            <i className="h-[6px] bg-white" />
          </div>
          <h1 className="ml-[105px] pt-[5px] text-[60px] leading-[70px] font-medium">Maps</h1>
        </header>
        <section className="flex h-[351px] flex-col pt-[15px]">
          <SearchRow value="Rohini East" />
          <SearchRow value="Laxmi Nagar" />
        </section>
        <div className="px-[15px]">
          <button className="block h-[144px] w-full bg-[#009688] pt-[3px] text-[42px] leading-none font-medium tracking-[-0.1px] text-white shadow-[0_0_4px_rgba(0,0,0,0.35)]">
            FIND BEST ROUTE
          </button>
        </div>
        <div className="relative mx-[15px] h-[1026px] overflow-hidden">
          <MapCanvas />
          <button className="absolute top-[36px] right-[36px] flex h-[114px] w-[114px] items-center justify-center rounded-[4px] bg-white/75 shadow-[0_1px_5px_rgba(0,0,0,0.25)]">
            <svg viewBox="-32 -32 64 64" className="h-[64px] w-[64px]" fill="none" stroke="#666" strokeWidth="4">
              <circle r="22" /><circle r="12" fill="#666" stroke="none" />
              <path d="M0-32v9M0 23v9M-32 0h9M23 0h9" />
            </svg>
          </button>
          <div className="absolute right-[36px] bottom-[30px] flex h-[228px] w-[114px] flex-col rounded-[4px] bg-white/75 shadow-[0_1px_5px_rgba(0,0,0,0.25)]">
            <button className="flex flex-1 items-center justify-center border-b-4 border-[#e9e6e4] pt-[2px]">
              <svg viewBox="0 0 50 50" className="h-[50px] w-[50px]" fill="#666"><path d="M20 0h10v20h20v10H30v20H20V30H0V20h20z" /></svg>
            </button>
            <button className="flex flex-1 items-center justify-center pb-[2px]">
              <i className="h-[10px] w-[50px] bg-[#666]" />
            </button>
          </div>
        </div>
        <nav className="mt-[15px] flex h-[144px] items-center justify-center gap-[240px] bg-black">
          <svg viewBox="0 0 60 60" className="h-[60px] w-[60px]" fill="none" stroke="#e8e8e8" strokeWidth="5.5" strokeLinejoin="round"><path d="M51 5.500V54.500L8.500 30z" /></svg>
          <svg viewBox="0 0 60 60" className="h-[60px] w-[60px]" fill="none" stroke="#e8e8e8" strokeWidth="5.500"><circle cx="30" cy="30" r="25" /></svg>
          <svg viewBox="0 0 60 60" className="h-[60px] w-[60px]" fill="none" stroke="#e8e8e8" strokeWidth="5.500"><rect x="8" y="8" width="44" height="44" rx="1.500" /></svg>
        </nav>
      </main>
    </div>
  );
}
